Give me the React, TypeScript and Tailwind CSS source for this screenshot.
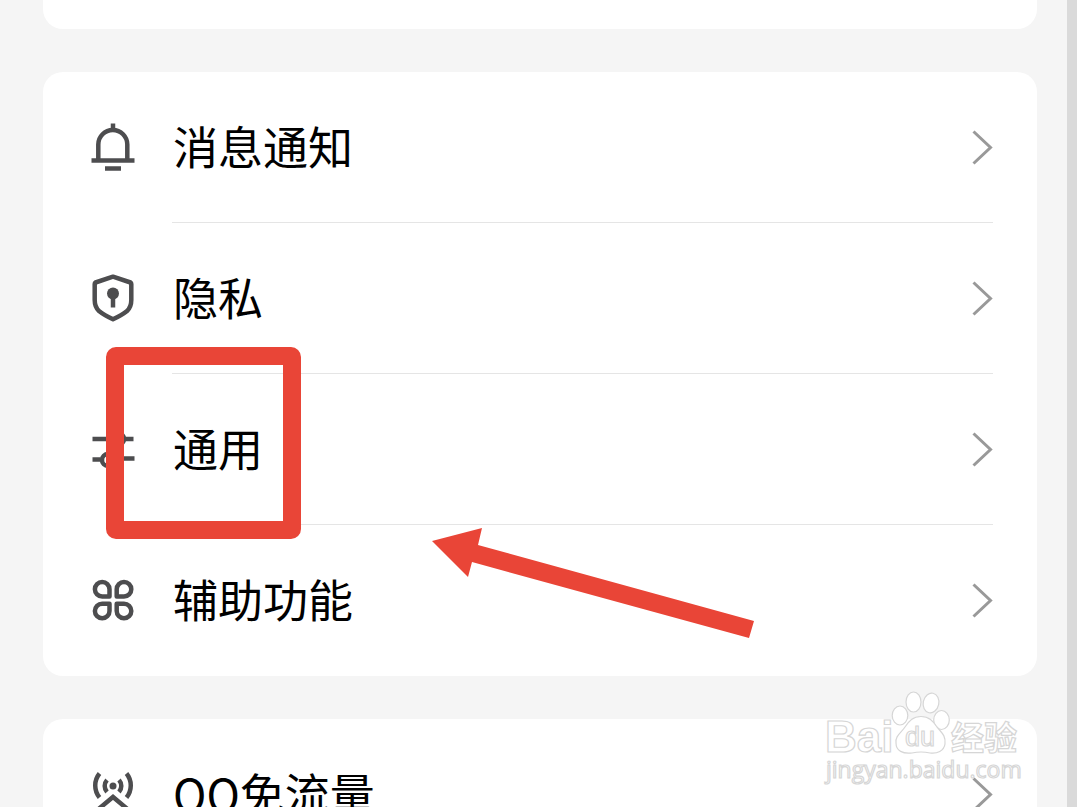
import React from 'react';

const BellIcon = () => (
  <svg viewBox="0 0 44 50" className="w-11 h-[50px]" fill="none" stroke="#4d4d4f" strokeWidth="4.5">
    <path d="M22 0.500v6" />
    <path d="M7.300 38V21.500a14.500 14.500 0 0 1 29 0V38" />
    <path d="M0.500 37.500h43" />
    <path d="M14 45.500h16" />
  </svg>
);

const ShieldIcon = () => (
  <svg viewBox="0 0 44 50" className="w-11 h-[50px]" fill="none" stroke="#4d4d4f" strokeWidth="4.5">
    <path d="M22 2.700L4.500 8.500Q3.700 9 3.700 10V26Q3.700 33 8 37Q13 41 22 45.300Q31 41 36 37Q40.300 33 40.300 26V10Q40.300 9 39.500 8.500Z" strokeLinejoin="round" />
    <circle cx="22" cy="19.500" r="6" fill="#4d4d4f" stroke="none" />
    <path d="M22 21v12.500" />
  </svg>
);

const SlidersIcon = () => (
  <svg viewBox="0 0 44 50" className="w-11 h-[50px]" fill="none" stroke="#4d4d4f" strokeWidth="4.5">
    <path d="M1.500 14h19M34 14h8.500" />
    <circle cx="27" cy="14" r="6" />
    <path d="M1.500 34.500h8M24 33.500h19.500" />
    <circle cx="17" cy="35" r="6" />
  </svg>
);

const CloverIcon = () => (
  <svg viewBox="0 0 44 50" className="w-11 h-[50px]" fill="none" stroke="#4d4d4f" strokeWidth="4.5" strokeLinejoin="round">
    <path d="M18.500 20.500h-7.300a7.300 7.300 0 1 1 7.300-7.300z" />
    <path d="M25.700 20.500h7.300a7.300 7.300 0 1 0-7.300-7.300z" />
    <path d="M18.500 27.700h-7.300a7.300 7.300 0 1 0 7.300 7.300z" />
    <path d="M25.700 27.700h7.300a7.300 7.300 0 1 1-7.300 7.300z" />
  </svg>
);

const SignalIcon = () => (
  <svg viewBox="0 0 44 50" className="w-11 h-[50px]" fill="none" stroke="#4d4d4f" strokeWidth="4.5">
    <circle cx="22" cy="16" r="3.500" fill="#4d4d4f" stroke="none" />
    <path d="M16 10a9 9 0 0 0 0 12M28 10a9 9 0 0 1 0 12" />
    <path d="M8.500 3.500a19 19 0 0 0 0 24M35.500 3.500a19 19 0 0 1 0 24" />
    <path d="M4 42l18-15l18 15" />
  </svg>
);

const Chevron = () => (
  <svg viewBox="0 0 22 36" className="w-[22px] h-9" fill="none" stroke="#999" strokeWidth="3">
    <path d="M2.500 2.500l17 16l-17 16" />
  </svg>
);

const settings = [
  { title: '消息通知', icon: <BellIcon /> },
  { title: '隐私', icon: <ShieldIcon /> },
  { title: '通用', icon: <SlidersIcon />, marked: true },
  { title: '辅助功能', icon: <CloverIcon /> },
];

type RowProps = {
  title: string;
  icon: React.ReactNode;
  marked?: boolean;
  last?: boolean;
};

const SettingRow = ({ title, icon, marked, last }: RowProps) => (
  <li className="relative">
    <button className="w-full h-[151px] flex items-stretch pl-12 pr-11 text-left">
      <span className="w-[81px] shrink-0 flex items-center">{icon}</span>
      <span className={`flex-1 flex items-center justify-between border-b ${last ? 'border-transparent' : 'border-[#e5e5e5]'}`}>
        <span className="pl-px pb-0.5 text-[45px] leading-[60px] text-black">{title}</span>
        <Chevron />
      </span>
    </button>
    {marked && (
      <span className="absolute left-[63px] -top-[27px] w-[195px] h-48 border-[18px] border-[#e94537] rounded-[10px] pointer-events-none" />
    )}
  </li>
);

const Watermark = () => (
  <svg
    viewBox="0 0 200 100"
    className="absolute right-[54px] bottom-[20px] w-[200px] h-[100px] pointer-events-none"
    fill="#fff"
    stroke="#d6d6d6"
    strokeWidth="1.2"
  >
    <ellipse cx="77" cy="28.500" rx="7.800" ry="9.500" />
    <ellipse cx="90.500" cy="15" rx="7.500" ry="10" />
    <ellipse cx="108" cy="16" rx="7.800" ry="10" transform="rotate(12 108 16)" />
    <ellipse cx="118.500" cy="33" rx="7.800" ry="9.500" />
    <path d="M98 29.500C106 29.500 110 34 114 40C119 46 123 49 122 57C121 64 114 67 107 66Q98 64 89 66C80 67 73 64 73 56C72 49 78 46 82 40C86 34 90 29.500 98 29.500Z" />
    <text x="2" y="65" className="font-['Liberation_Sans',sans-serif] font-bold text-[44px]">Bai</text>
    <text x="82" y="59" className="font-['Liberation_Sans',sans-serif] text-[27px]">du</text>
    <text x="128" y="63" className="font-['Noto_Sans_CJK_SC',sans-serif] font-bold text-[33px]">经验</text>
    <text x="3" y="91" className="font-['Open_Sans',sans-serif] text-[23px]">jingyan.baidu.com</text>
  </svg>
);

const App = () => {
  return (
    <div className="relative h-screen overflow-hidden flex bg-[#f5f5f5] font-['Noto_Sans_CJK_SC',sans-serif]">
      <main className="flex-1 pl-[43px] pr-[30px] flex flex-col gap-[43px]">
        <div className="h-[29px] shrink-0 bg-white rounded-b-[20px]" />

        <section className="relative shrink-0 bg-white rounded-[20px]">
          <ul>
            {settings.map((item, index) => (
              <SettingRow key={item.title} {...item} last={index === settings.length - 1} />
            ))}
          </ul>
          <svg viewBox="0 0 322 110" className="absolute left-[389px] top-[456px] w-[322px] h-[110px] pointer-events-none" fill="#e94537">
            <path d="M0 13L50 0L46 17L322 93L317 110L40 34L36 49Z" />
          </svg>
        </section>

        <section className="shrink-0 bg-white rounded-[20px]">
          <ul>
            <SettingRow title="QQ免流量" icon={<SignalIcon />} last />
          </ul>
        </section>
      </main>
      <div className="w-[10px] shrink-0 bg-[#dadada]" />
      <Watermark />
    </div>
  );
};

export default App;
